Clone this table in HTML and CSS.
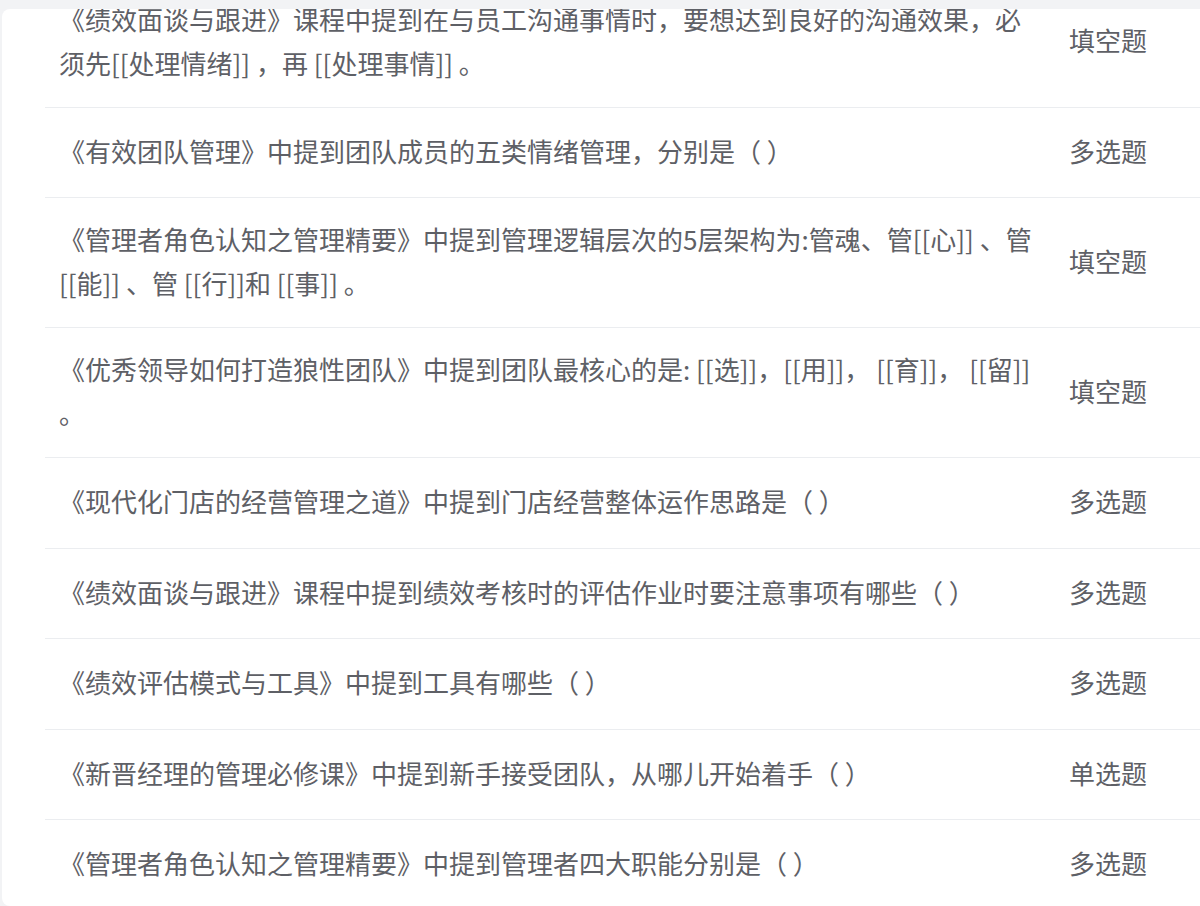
FILE: index.html
```html
<!DOCTYPE html>
<html lang="zh-CN">
<head>
    <meta charset="UTF-8">
    <meta name="viewport" content="width=device-width, initial-scale=1.0">
    <title>题目列表</title>
    <link rel="stylesheet" href="styles.css">
</head>
<body>
    <div class="card">
        <ul class="question-list">
            <li class="question-row">
                <div class="question-title">《绩效面谈与跟进》课程中提到在与员工沟通事情时，要想达到良好的沟通效果，必须先[[处理情绪]] ，再 [[处理事情]] 。</div>
                <div class="question-type">填空题</div>
            </li>
            <li class="question-row">
                <div class="question-title">《有效团队管理》中提到团队成员的五类情绪管理，分别是（ ）</div>
                <div class="question-type">多选题</div>
            </li>
            <li class="question-row">
                <div class="question-title">《管理者角色认知之管理精要》中提到管理逻辑层次的5层架构为:管魂、管[[心]] 、管 [[能]] 、管 [[行]]和 [[事]] 。</div>
                <div class="question-type">填空题</div>
            </li>
            <li class="question-row">
                <div class="question-title">《优秀领导如何打造狼性团队》中提到团队最核心的是: [[选]]，[[用]]， [[育]]， [[留]] 。</div>
                <div class="question-type">填空题</div>
            </li>
            <li class="question-row">
                <div class="question-title">《现代化门店的经营管理之道》中提到门店经营整体运作思路是（ ）</div>
                <div class="question-type">多选题</div>
            </li>
            <li class="question-row">
                <div class="question-title">《绩效面谈与跟进》课程中提到绩效考核时的评估作业时要注意事项有哪些（ ）</div>
                <div class="question-type">多选题</div>
            </li>
            <li class="question-row">
                <div class="question-title">《绩效评估模式与工具》中提到工具有哪些（ ）</div>
                <div class="question-type">多选题</div>
            </li>
            <li class="question-row">
                <div class="question-title">《新晋经理的管理必修课》中提到新手接受团队，从哪儿开始着手（ ）</div>
                <div class="question-type">单选题</div>
            </li>
            <li class="question-row">
                <div class="question-title">《管理者角色认知之管理精要》中提到管理者四大职能分别是（ ）</div>
                <div class="question-type">多选题</div>
            </li>
        </ul>
    </div>
</body>
</html>
```

FILE: styles.css
```css
html, body {
    height: 100%;
}
body {
    margin: 0;
    padding: 9px 0 0 2px;
    box-sizing: border-box;
    background-color: #f2f3f5;
    font-family: "Noto Sans CJK SC", "Noto Sans", sans-serif;
    color: #5e6066;
    overflow: hidden;
}
.card {
    width: 1240px;
    height: 100%;
    background-color: #ffffff;
    border-radius: 8px;
    overflow: hidden;
}
/* list is scrolled a little, first row is cut by the card top */
.question-list {
    list-style: none;
    margin: -31.5px 0 0 43px;
    padding: 0;
}
.question-row {
    display: flex;
    align-items: center;
    padding: 19px 0 22px 14px;
    border-bottom: 1px solid #ebedf0;
}
.question-title {
    width: 980px;
    font-size: 26px;
    line-height: 44px;
}
.question-type {
    margin-left: 30px;
    font-size: 26px;
    line-height: 48.5px;
    white-space: nowrap;
}
```
